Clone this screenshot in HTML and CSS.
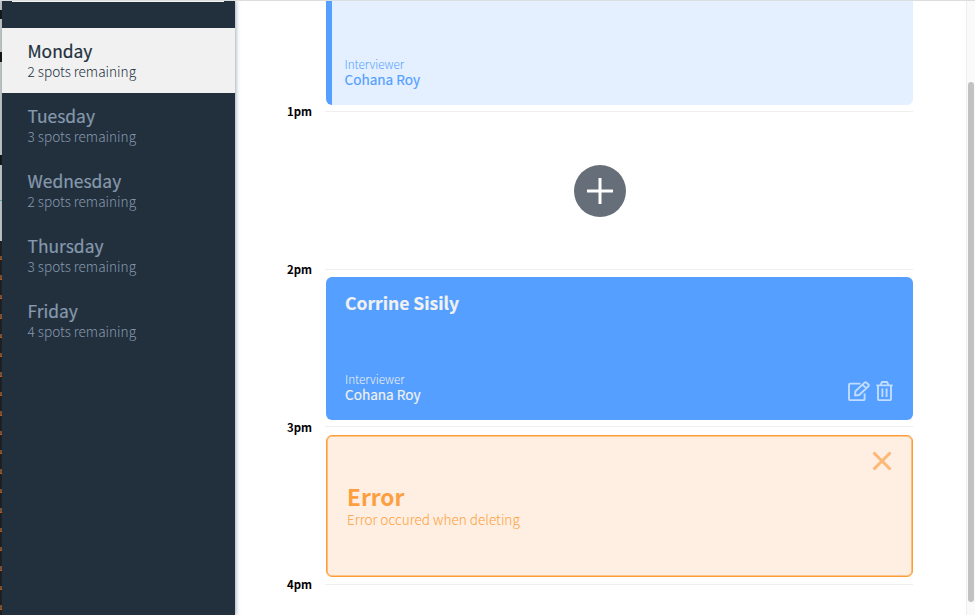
FILE: index.html
```html
<!DOCTYPE html>
<html lang="en">
<head>
<meta charset="utf-8">
<title>Interview Scheduler</title>
<link rel="stylesheet" href="styles.css">
</head>
<body>
<div class="app">
  <div class="backdrop"><div class="backdrop-light"></div><div class="backdrop-dark"></div></div>
  <nav class="sidebar">
    <div class="separator"></div>
    <ul class="days">
      <li class="day day-selected"><h2>Monday</h2><p>2 spots remaining</p></li>
      <li class="day"><h2>Tuesday</h2><p>3 spots remaining</p></li>
      <li class="day"><h2>Wednesday</h2><p>2 spots remaining</p></li>
      <li class="day"><h2>Thursday</h2><p>3 spots remaining</p></li>
      <li class="day"><h2>Friday</h2><p>4 spots remaining</p></li>
    </ul>
  </nav>
  <main class="schedule">
    <article class="card card-faded">
      <h4>Interviewer</h4><h3>Cohana Roy</h3>
    </article>
    <section class="slot">
      <header><h4>1pm</h4><hr></header>
      <div class="empty">
        <svg class="add" viewBox="0 0 52 52"><circle cx="26" cy="26" r="26"/><path d="M13 26h26M26 13v26"/></svg>
      </div>
    </section>
    <section class="slot">
      <header><h4>2pm</h4><hr></header>
      <article class="card card-show">
        <h2>Corrine Sisily</h2>
        <div class="row">
          <div><h4>Interviewer</h4><h3>Cohana Roy</h3></div>
          <div class="actions">
            <svg class="edit" viewBox="0 0 22 20"><path d="M12.5 2.6H2.2Q1 2.6 1 3.8V18Q1 19.2 2.2 19.2H15.4Q16.6 19.2 16.6 18V12.6M7.4 10.2L16.6 1.6Q17.5.8 18.4 1.6L20.4 3.5Q21.2 4.4 20.4 5.3L11.2 14L7 14.5ZM14.5 3.7L18.2 7.4"/></svg>
            <svg class="trash" viewBox="0 0 17 20"><path d="M.3 4.4H16.7M2 4.4V18Q2 19.2 3.2 19.2H13.8Q15 19.2 15 18V4.4M4.5 4.2L6 1H11L12.5 4.2M6.4 7.4V16M10.6 7.4V16"/></svg>
          </div>
        </div>
      </article>
    </section>
    <section class="slot">
      <header><h4>3pm</h4><hr></header>
      <article class="card card-error">
        <svg class="close" viewBox="0 0 20 20"><path d="M1.5 1.5L18.5 18.5M18.5 1.5L1.5 18.5"/></svg>
        <h1>Error</h1>
        <p>Error occured when deleting</p>
      </article>
    </section>
    <section class="slot">
      <header><h4>4pm</h4><hr></header>
    </section>
  </main>
  <div class="scrollbar"><div class="thumb"></div></div>
</div>
</body>
</html>
```
FILE: styles.css
```css
* { box-sizing: border-box; margin: 0; padding: 0; }
body {
  width: 977px; height: 616px; overflow: hidden; background: #fff;
  font-family: "Noto Sans CJK SC", "Noto Sans", sans-serif;
}
h1, h2, h3, h4, p { white-space: nowrap; }
.app { display: flex; width: 975px; height: 615px; border-top: 1px solid #dcddde; overflow: hidden; }
.backdrop { width: 2px; flex: none; }
.backdrop-light {
  height: 240px;
  background: linear-gradient(transparent 9px, #111 9px 18px, transparent 18px 51px, #111 51px 61px, transparent 61px 154px, #111 154px 164px, transparent 164px 199px, #54b5a6 199px 200px, transparent 200px), #c4c6c7;
}
.backdrop-dark {
  height: 375px;
  background: repeating-linear-gradient(#1c1b1c 0 15px, #80502e 15px 18.4px, #c85a0c 18.4px 19.4px);
}
.sidebar {
  width: 233px; flex: none; background: #22303d; position: relative;
  box-shadow: 1px 0 4px rgba(60, 90, 120, .5);
}
.separator { height: 1px; margin: 0 11px 26px 10px; background: #f2f2f2; }
.days { list-style: none; }
.day { height: 64.8px; padding: 11.45px 26px 0 25.5px; color: #8699ad; }
.day h2 { font-size: 17.4px; line-height: 23px; font-weight: 400; -webkit-text-stroke: .2px; }
.day p { font-size: 13.6px; line-height: 18.4px; font-weight: 300; }
.day-selected { background: #f1f1f1; color: #22303d; }
.schedule { width: 731px; flex: none; padding: 0 53px 0 52px; }
.card { width: 587px; height: 142.5px; margin-left: 39px; border-radius: 6px; }
.card h4 { font-size: 11.7px; line-height: 15px; font-weight: 300; }
.card h3 { font-size: 13.6px; line-height: 16px; font-weight: 400; -webkit-text-stroke: .2px; }
.card-faded {
  height: 103.5px; border-radius: 0 0 6px 6px; border-left: 6.5px solid #549fff;
  background: #e4f0ff; color: #549fff; padding: 55px 0 0 12.5px;
}
.slot { height: 157.6px; }
.card-faded + .slot { margin-top: -.6px; }
.slot header { display: flex; align-items: center; height: 15px; }
.slot header h4 { width: 25px; margin: 1px 13px 0 0; font-size: 11.4px; line-height: 15px; font-weight: 700; }
.slot hr { flex: 1; border: 0; height: 1px; background: #efefef; }
.empty { height: 142px; margin-left: 39px; padding: 45.6px 0 0 248px; }
.add { width: 52px; height: 52px; fill: #666e7a; stroke: #fff; stroke-width: 3; }
.add circle { stroke: none; }
.card-show {
  display: flex; flex-direction: column; justify-content: space-between;
  margin-top: .6px; padding: 14px 20px 18px 19px; background: #549fff; color: #f1f1f1;
}
.card-show h2 { font-size: 17.5px; line-height: 24px; font-weight: 700; -webkit-text-stroke: .2px; }
.row { display: flex; justify-content: space-between; align-items: flex-end; }
.actions { display: flex; gap: 6px; margin-bottom: .5px; fill: none; stroke: #c2dcff; stroke-width: 1.9; stroke-linejoin: round; }
.edit { width: 22px; height: 20px; }
.trash { width: 17px; height: 20px; }
.card-error {
  margin-top: .6px; padding: 15.8px 20px; border: 1px solid #fd9d37; box-shadow: inset 0 0 0 .6px #fd9d37;
  background: #feefe2; color: #fd9f40;
}
.close { display: block; width: 20px; height: 20px; margin-left: auto; fill: none; stroke: #feb775; stroke-width: 3; }
.card-error h1 { margin-top: 12px; font-size: 22.6px; line-height: 28px; font-weight: 700; }
.card-error p { margin-top: -1px; font-size: 13.6px; line-height: 18px; font-weight: 300; }
.scrollbar { width: 9px; flex: none; padding: 81px 1px 0; background: #fafafa; border-left: 1px solid #eee; }
.thumb { width: 6px; height: 520px; border-radius: 3px; background: #c2c2c2; }
```
